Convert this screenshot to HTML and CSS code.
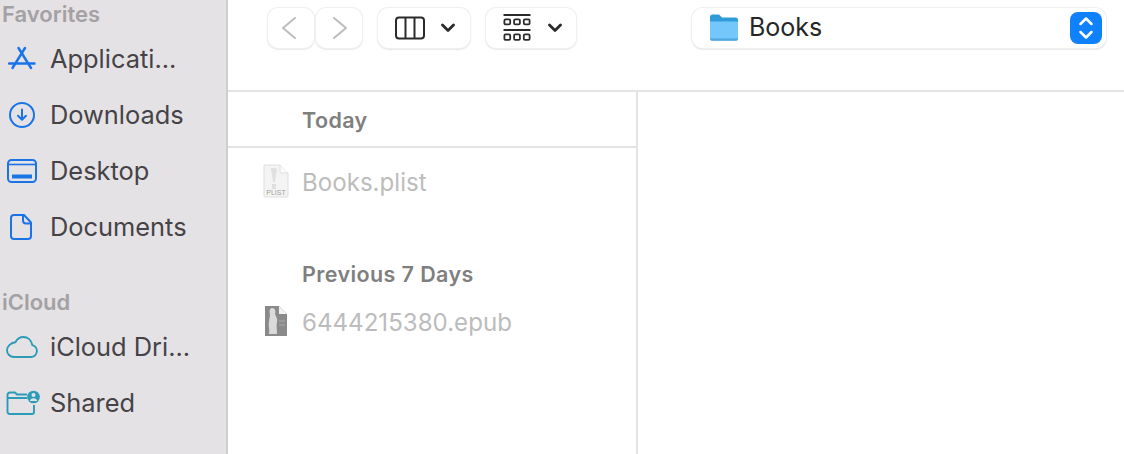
FILE: index.html
```html
<!DOCTYPE html>
<html lang="en">
<head>
<meta charset="utf-8">
<title>Books</title>
<link rel="stylesheet" href="styles.css">
</head>
<body>
<div class="window">
  <aside class="sidebar">
    <div class="side-head side-head-first">Favorites</div>
    <div class="side-item">
      <svg class="side-icon icon-apps" width="28" height="28" viewBox="0 0 28 28" fill="none" stroke="#1a74e8" stroke-width="2.4" stroke-linecap="round"><path d="M10.500 3 23 23M17 3 4.500 23M1 18.500H26.500"/></svg>
      <span>Applicati...</span>
    </div>
    <div class="side-item">
      <svg class="side-icon icon-down" width="28" height="28" viewBox="0 0 28 28" fill="none" stroke="#1a74e8" stroke-linecap="round" stroke-linejoin="round"><circle cx="14" cy="14" r="12" stroke-width="2"/><path d="M14 8.500v10M10 14.800 14 18.800 18 14.800" stroke-width="2"/></svg>
      <span>Downloads</span>
    </div>
    <div class="side-item">
      <svg class="side-icon icon-desk" width="30" height="28" viewBox="0 0 30 28" fill="none"><rect x="1" y="3" width="28" height="22" rx="3.500" stroke="#1a74e8" stroke-width="2"/><path d="M1.500 7.500h27" stroke="#1a74e8" stroke-width="1.600"/><rect x="5" y="17.500" width="20" height="4" fill="#1a74e8"/></svg>
      <span>Desktop</span>
    </div>
    <div class="side-item">
      <svg class="side-icon icon-docs" width="28" height="28" viewBox="0 0 28 28" fill="none" stroke="#1a74e8" stroke-width="2" stroke-linejoin="round"><path d="M7 2h10l7 7.500v13.500a3 3 0 0 1-3 3H7a3 3 0 0 1-3-3V5a3 3 0 0 1 3-3Z"/><path d="M16 2v5.500a3 3 0 0 0 3 3h5"/></svg>
      <span>Documents</span>
    </div>
    <div class="side-head side-head-cloud">iCloud</div>
    <div class="side-item">
      <svg class="side-icon" width="32" height="28" viewBox="0 0 32 28" fill="none" stroke="#2a9cb8" stroke-width="1.900" stroke-linejoin="round"><path d="M8 24h17a6 6 0 0 0 1.400-11.800C25.400 7 21.600 4 17.500 4c-3.500 0-6.500 2-8 5.200C5 9.500 1 13.500 1 17.200 1 21 4 24 8 24Z"/></svg>
      <span>iCloud Dri...</span>
    </div>
    <div class="side-item">
      <svg class="side-icon" width="34" height="28" viewBox="0 0 34 28" fill="none"><path d="M1.500 9H21M21 5.500H11L9 3.500H4A2.500 2.500 0 0 0 1.500 6v16.500A2.500 2.500 0 0 0 4 25h22a2 2 0 0 0 2-2v-7" stroke="#2a9cb8" stroke-width="1.900" stroke-linejoin="round"/><circle cx="27.500" cy="8" r="6.300" fill="#2a9cb8"/><circle cx="27.500" cy="6" r="2" fill="#e5e2e5"/><path d="M23.800 12a3.800 3.500 0 0 1 7.400 0Z" fill="#e5e2e5"/></svg>
      <span>Shared</span>
    </div>
  </aside>
  <main class="main">
    <header class="toolbar">
      <div class="nav-pair">
        <button class="tb-btn nav-btn nav-back" type="button">
          <svg width="14" height="22" viewBox="0 0 14 22" fill="none" stroke="#bcbcbc" stroke-width="2" stroke-linecap="round" stroke-linejoin="round"><path d="M13 1 1 11l12 10"/></svg>
        </button>
        <button class="tb-btn nav-btn nav-next" type="button">
          <svg width="14" height="22" viewBox="0 0 14 22" fill="none" stroke="#bcbcbc" stroke-width="2" stroke-linecap="round" stroke-linejoin="round"><path d="M1 1l12 10L1 21"/></svg>
        </button>
      </div>
      <button class="tb-btn view-btn" type="button">
        <svg width="30" height="24" viewBox="0 0 30 24" fill="none" stroke="#2b2b2b" stroke-width="2"><rect x="1" y="1.500" width="28" height="21" rx="3"/><path d="M10.500 2v20M19.500 2v20"/></svg>
        <svg class="chev" width="14" height="10" viewBox="0 0 14 10" fill="none" stroke="#2b2b2b" stroke-width="2.800" stroke-linecap="round" stroke-linejoin="round"><path d="M1.500 2 7 7.500 12.500 2"/></svg>
      </button>
      <button class="tb-btn group-btn" type="button">
        <svg width="28" height="28" viewBox="0 0 28 28" fill="none" stroke="#2b2b2b"><path d="M0.500 1h27M0.500 16h27" stroke-width="1.800"/><g stroke-width="1.800"><rect x="1.400" y="5.400" width="5.800" height="5" rx="1.200"/><rect x="11.100" y="5.400" width="5.800" height="5" rx="1.200"/><rect x="20.800" y="5.400" width="5.800" height="5" rx="1.200"/><rect x="1.400" y="20.400" width="5.800" height="5.500" rx="1.200"/><rect x="11.100" y="20.400" width="5.800" height="5.500" rx="1.200"/><rect x="20.800" y="20.400" width="5.800" height="5.500" rx="1.200"/></g></svg>
        <svg class="chev" width="14" height="10" viewBox="0 0 14 10" fill="none" stroke="#2b2b2b" stroke-width="2.800" stroke-linecap="round" stroke-linejoin="round"><path d="M1.500 2 7 7.500 12.500 2"/></svg>
      </button>
      <div class="path-select">
        <svg class="folder" width="30" height="28" viewBox="0 0 30 28" fill="none"><path d="M1 3a2.500 2.500 0 0 1 2.500-2.500h6.500l3 3h13.500A2.500 2.500 0 0 1 29 6v4H1Z" fill="#2f9bd8"/><path d="M1 7.500h28v17a2 2 0 0 1-2 2H3a2 2 0 0 1-2-2Z" fill="#74c7fb"/><path d="M1 24.500h28v.500a1.800 1.800 0 0 1-1.800 1.800H2.800A1.800 1.800 0 0 1 1 25Z" fill="#4fa6dc"/></svg>
        <span class="path-name">Books</span>
        <span class="stepper">
          <svg width="18" height="26" viewBox="0 0 18 26" fill="none" stroke="#fff" stroke-width="2.500" stroke-linecap="round" stroke-linejoin="round"><path d="M3.500 9 9 3.500 14.500 9M3.500 17 9 22.500 14.500 17"/></svg>
        </span>
      </div>
    </header>
    <div class="browser">
      <section class="column">
        <div class="group group-today">Today</div>
        <div class="file file-plist">
          <svg class="file-icon" width="28" height="34" viewBox="0 0 28 34"><path d="M2 1h16l8 8v23a1 1 0 0 1-1 1H3a1 1 0 0 1-1-1Z" fill="#f4f4f4" stroke="#dedede"/><path d="M18 1v7a1 1 0 0 0 1 1h7" fill="#fbfbfb" stroke="#dedede"/><path d="M9 4h5l1 3-1 3-1 8h-2l-1-8-1-3ZM10 20h4v5h-4Z" fill="#e0e0e0"/><text x="14" y="30.500" class="plist-label">PLIST</text></svg>
          <span>Books.plist</span>
        </div>
        <div class="group group-prev">Previous 7 Days</div>
        <div class="file file-epub">
          <svg class="file-icon" width="24" height="32" viewBox="0 0 24 32"><path d="M1 1h14l8 8v22H1Z" fill="#8a8a8a"/><path d="M15 1v8h8Z" fill="#f2f2f2"/><path d="M8 3c3 0 4 3 3 6 1 3 3 5 2 8-1 3 0 7 0 12H5c1-5-1-8 0-12 0-3 1-5 1-8-1-3 0-6 2-6Z" fill="#dadada"/><path d="M15 16h6M15 20h6" stroke="#aaaaaa"/></svg>
          <span>6444215380.epub</span>
        </div>
      </section>
      <section class="preview"></section>
    </div>
  </main>
</div>
</body>
</html>
```

FILE: styles.css
```css
* { box-sizing: border-box; }
html, body { margin: 0; height: 100%; }
body {
  width: 1124px;
  height: 454px;
  overflow: hidden;
  background: #fff;
  font-family: Inter, "Liberation Sans", sans-serif;
}
.window { display: flex; height: 454px; }

.sidebar {
  width: 228px;
  flex: none;
  background: #e5e2e5;
  border-right: 2px solid #cfcdcf;
  overflow: hidden;
}
.side-head {
  height: 28px;
  padding-left: 2px;
  font-size: 22px;
  line-height: 28px;
  font-weight: 600;
  color: #a3a1a4;
}
.side-head-cloud { margin-top: 33px; margin-bottom: 3px; }
.side-item {
  position: relative;
  display: flex;
  align-items: center;
  height: 56px;
  padding-left: 50px;
  font-size: 25.400px;
  color: #454347;
  white-space: nowrap;
}
.side-item span { padding-bottom: 2px; }
.side-head-first + .side-item { margin-top: 3px; }
.side-icon {
  position: absolute;
  left: 6px;
  top: 14px;
}
.icon-apps { left: 8px; }
.icon-down { left: 8px; }
.icon-desk { left: 7px; }
.icon-docs { left: 7px; }

.main { flex: 1; min-width: 0; display: flex; flex-direction: column; }
.toolbar {
  height: 92px;
  flex: none;
  display: flex;
  align-items: flex-start;
  padding-top: 8px;
  padding-left: 40px;
  border-bottom: 2px solid #e4e4e4;
}
.tb-btn {
  display: flex;
  align-items: center;
  justify-content: center;
  height: 40px;
  padding: 0;
  background: #fff;
  border: 0;
  border-radius: 10px;
  box-shadow: 0 0 0 1px #f0f0f0, 0 1px 2px 0 #b8b8b8;
}
.nav-pair { display: flex; gap: 2px; }
.nav-btn { width: 46px; }
.nav-back { padding-right: 4px; }
.nav-next { padding-left: 2px; }
.view-btn { width: 92px; margin-left: 16px; gap: 16px; padding-left: 2px; }
.group-btn { width: 90px; margin-left: 16px; gap: 17px; padding-left: 3px; }
.chev { flex: none; }
.path-select {
  display: flex;
  align-items: center;
  width: 414px;
  height: 40px;
  margin-left: 116px;
  padding-left: 17px;
  padding-right: 4px;
  background: #fff;
  border-radius: 11px;
  box-shadow: 0 0 0 1px #f0f0f0, 0 1px 2px 0 #b8b8b8;
}
.folder { flex: none; }
.path-name {
  flex: 1;
  margin-left: 10px;
  padding-bottom: 2px;
  font-size: 25px;
  color: #262626;
}
.stepper {
  display: flex;
  align-items: center;
  justify-content: center;
  width: 32px;
  height: 32px;
  border-radius: 8px;
  background: #0f82fb;
}

.browser { flex: 1; display: flex; min-height: 0; }
.column {
  width: 410px;
  flex: none;
  border-right: 2px solid #e4e4e4;
}
.preview { flex: 1; }
.group {
  padding-left: 74px;
  font-size: 21.500px;
  letter-spacing: 0.4px;
  font-weight: 600;
  color: #7f7f7f;
}
.group-today {
  height: 56px;
  line-height: 57px;
  border-bottom: 2px solid #e4e4e4;
}
.group-prev { margin-top: 43px; height: 30px; line-height: 30px; }
.file {
  position: relative;
  display: flex;
  align-items: center;
  padding-left: 74px;
  font-size: 24.100px;
  color: #bcbcbc;
}
.file-plist { height: 68px; }
.file-epub { height: 66px; }
.file-icon { position: absolute; left: 34px; margin-top: -2px; }
.file-epub .file-icon { left: 36px; }
.plist-label {
  font-family: "Liberation Sans", sans-serif;
  font-size: 7px;
  fill: #a0a0a0;
  text-anchor: middle;
}
```
